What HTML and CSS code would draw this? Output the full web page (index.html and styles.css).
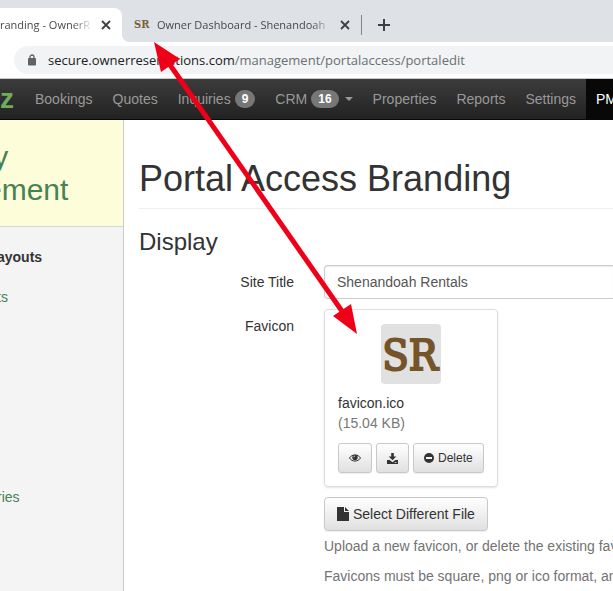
FILE: index.html
```html
<!DOCTYPE html>
<html lang="en">
<head>
<meta charset="utf-8">
<meta name="viewport" content="width=device-width, initial-scale=1">
<title>Portal Access Branding</title>
<link rel="stylesheet" href="styles.css">
</head>
<body>
<div class="tabstrip">
  <div class="tab tab-active">
    <span class="tab-title">randing - OwnerR</span>
    <button class="icon-button" type="button" aria-label="Close tab"><svg width="10" height="10" viewBox="0 0 10 10"><path d="M1 1l8 8M9 1l-8 8" stroke="#3c4043" stroke-width="1.800"/></svg></button>
  </div>
  <div class="tab">
    <span class="tab-favicon">SR</span>
    <span class="tab-title">Owner Dashboard - Shenandoah</span>
    <button class="icon-button" type="button" aria-label="Close tab"><svg width="10" height="10" viewBox="0 0 10 10"><path d="M1 1l8 8M9 1l-8 8" stroke="#3c4043" stroke-width="1.800"/></svg></button>
  </div>
  <span class="tab-divider"></span>
  <button class="icon-button" type="button" aria-label="New tab"><svg width="12" height="12" viewBox="0 0 12 12"><path d="M6 0v12M0 6h12" stroke="#3c4043" stroke-width="2"/></svg></button>
</div>
<div class="toolbar">
  <div class="omnibox">
    <svg width="8" height="12" viewBox="0 0 8 12"><path d="M2 5V3a2 2 0 0 1 4 0v2" fill="none" stroke="#5f6368" stroke-width="1.3"/><rect y="4" width="8" height="7.5" rx="1" fill="#5f6368"/></svg>
    <div class="url" role="textbox" aria-label="Address"><span class="url-host">secure.ownerreservations.com</span>/management/portalaccess/portaledit</div>
  </div>
</div>
<nav class="navbar">
  <a class="brand" href="#">z</a>
  <a class="nav-link" href="#">Bookings</a>
  <a class="nav-link" href="#">Quotes</a>
  <a class="nav-link" href="#">Inquiries <span class="badge">9</span></a>
  <a class="nav-link" href="#">CRM <span class="badge">16</span> <span class="caret"></span></a>
  <a class="nav-link" href="#">Properties</a>
  <a class="nav-link" href="#">Reports</a>
  <a class="nav-link" href="#">Settings</a>
  <a class="nav-link nav-link-active" href="#">PM</a>
</nav>
<div class="layout">
  <aside class="sidebar">
    <div class="sidebar-head"><div class="sidebar-title">ty<br>ement</div></div>
    <nav class="sidebar-nav">
      <strong>ayouts</strong>
      <a href="#">ts</a>
      <a class="sidebar-last" href="#">ries</a>
    </nav>
  </aside>
  <main class="content">
    <h1>Portal Access Branding</h1>
    <h2>Display</h2>
    <form class="form">
      <label for="site-title">Site Title</label>
      <input id="site-title" class="text-input" type="text" value="Shenandoah Rentals">
      <span class="field-label" id="favicon-label">Favicon</span>
      <div class="field" role="group" aria-labelledby="favicon-label">
        <div class="file-card">
          <svg class="preview" width="60" height="60" viewBox="0 0 60 60" role="img" aria-label="SR"><rect width="60" height="60" rx="4" fill="#e1e1e1"/><text class="preview-text" x="29" y="46" text-anchor="middle">SR</text></svg>
          <div class="file-name">favicon.ico</div>
          <div class="file-size">(15.04 KB)</div>
          <div class="actions">
            <button class="btn btn-small" type="button" aria-label="View"><svg width="12" height="10" viewBox="0 0 12 10"><path d="M.5 5C3 .9 9 .9 11.500 5 9 9.100 3 9.100.5 5z" fill="none" stroke="#333"/><circle cx="6" cy="4.500" r="2.700" fill="#333"/><path d="M4.600 4.200Q4.800 3 6 3" fill="none" stroke="#fff" stroke-width=".7"/></svg></button>
            <button class="btn btn-small" type="button" aria-label="Download"><svg width="11" height="11" viewBox="0 0 11 11"><path d="M4.200 0h2.600v3.500h2.500L5.500 7.300 1.700 3.500h2.500zM0 7h2.700l2.800 2.300L8.300 7H11v4H0z" fill="#333"/><path d="M7.500 9.500h2" stroke="#ddd" stroke-width=".8"/></svg></button>
            <button class="btn btn-small" type="button"><svg width="10" height="10" viewBox="0 0 10 10"><circle cx="5" cy="5" r="5" fill="#333"/><path d="M2 5h6" stroke="#f4f4f4" stroke-width="2"/></svg>Delete</button>
          </div>
        </div>
        <button class="btn" type="button"><svg width="12" height="14" viewBox="0 0 12 14"><path d="M0 0h7v5h5v9H0zM8 0l4 4H8z" fill="#333"/></svg>Select Different File</button>
        <p>Upload a new favicon, or delete the existing fav</p>
        <p>Favicons must be square, png or ico format, an</p>
      </div>
    </form>
  </main>
</div>
<svg class="callout" width="613" height="591" viewBox="0 0 613 591" aria-hidden="true"><path d="M168 62L344 314" stroke="#f00018" stroke-width="5"/><path d="M154 42l26 17-19 13zM357 334l-24-18 18-12z" fill="#f00018"/></svg>
</body>
</html>
```
FILE: styles.css
```css
* { box-sizing: border-box; }
body {
  margin: 0;
  min-height: 100vh;
  display: flex;
  flex-direction: column;
  position: relative;
  overflow: hidden;
  background: #fff;
  color: #333;
  font: 14px/20px "Liberation Sans", Arial, sans-serif;
}
a { color: #468254; text-decoration: none; }
button { font: inherit; color: inherit; }
svg { flex: none; }

.tabstrip {
  display: flex;
  height: 42px;
  padding-top: 8px;
  background: #dee1e6;
  font: 11px/34px "Open Sans", "Noto Sans", sans-serif;
  color: #45494d;
}
.tab {
  display: flex;
  align-items: center;
  gap: 8px;
  padding: 0 11px 0 12px;
  position: relative;
}
.tab-active {
  width: 122px;
  padding-left: 0;
  background: #fff;
  border-radius: 0 8px 0 0;
}
.tab-active::after {
  content: "";
  position: absolute;
  left: 100%;
  bottom: 0;
  width: 8px;
  height: 8px;
  background: radial-gradient(circle at 100% 0, transparent 8px, #fff 8px);
}
.tab-title {
  width: 175px;
  overflow: hidden;
  white-space: nowrap;
  -webkit-mask-image: linear-gradient(to left, transparent, #000 20px);
  mask-image: linear-gradient(to left, transparent, #000 20px);
}
.tab-active .tab-title { width: 93px; }
.tab-favicon {
  width: 15px;
  color: #7a6138;
  font: bold 11px/34px "DejaVu Serif Condensed", "DejaVu Serif", serif;
}
.icon-button {
  display: flex;
  align-items: center;
  padding: 0;
  border: 0;
  background: none;
}
.tab-divider {
  width: 1px;
  height: 20px;
  margin: 7px 16px 0 0;
  background: #808387;
}

.toolbar {
  height: 37px;
  padding: 4px 0 4px 14px;
  border-bottom: 1px solid #c8c8c8;
}
.omnibox {
  display: flex;
  align-items: center;
  gap: 12px;
  height: 28px;
  padding-left: 14px;
  border-radius: 14px 0 0 14px;
  background: #f1f3f4;
}
.url {
  font: 13px/28px "Open Sans", "Noto Sans", sans-serif;
  color: #6b6f73;
  white-space: nowrap;
}
.url-host { color: #202124; }

.navbar {
  display: flex;
  height: 41px;
  overflow: hidden;
  border-bottom: 1px solid #080808;
  background: linear-gradient(#3c3c3c, #222);
  line-height: 40px;
  white-space: nowrap;
}
.brand {
  flex: 0 0 25px;
  color: #70ad5b;
  font-size: 28px;
  font-weight: bold;
}
.nav-link {
  display: flex;
  flex: none;
  align-items: center;
  gap: 4px;
  padding: 0 10px;
  color: #999;
}
.nav-link-active { background: #080808; color: #fff; }
.badge {
  padding: 0 7px;
  border-radius: 9px;
  background: #777;
  color: #fff;
  font-size: 12px;
  font-weight: bold;
  line-height: 18px;
}
.caret {
  margin-left: 2px;
  border: 4px solid transparent;
  border-top-color: #999;
  border-bottom: 0;
}

.layout { display: flex; flex: 1; }
.sidebar {
  flex: 0 0 124px;
  overflow: hidden;
  border-right: 1px solid #ccc;
  background: #f4f4f4;
}
.sidebar-head {
  height: 107px;
  padding-top: 20px;
  border-bottom: 1px solid #d8d8d8;
  background: #fdfdd9;
}
.sidebar-title {
  margin-left: -15px;
  color: #468254;
  font-size: 30px;
  line-height: 33px;
}
.sidebar-nav {
  display: flex;
  flex-direction: column;
  gap: 20px;
  padding-top: 20px;
  margin-left: -3px;
}
.sidebar-last { margin-top: 160px; }

.content {
  flex: 1;
  min-width: 0;
  padding: 39px 0 0 15px;
  overflow: hidden;
}
h1, h2 { margin: 0; font-weight: normal; }
h1 {
  padding-bottom: 9px;
  border-bottom: 1px solid #eee;
  font-size: 36px;
  line-height: 40px;
}
h2 { padding: 20px 0 10px; font-size: 24px; line-height: 26px; }
.form {
  display: grid;
  grid-template-columns: 155px minmax(0, 1fr);
  column-gap: 30px;
  row-gap: 10px;
}
.form > label, .field-label { padding-top: 7px; text-align: right; }
.text-input {
  width: 100%;
  height: 34px;
  padding: 0 12px;
  border: 1px solid #ccc;
  border-right: 0;
  border-radius: 4px 0 0 4px;
  box-shadow: inset 0 1px 1px #ececec;
  color: #555;
  font: inherit;
}
.field { white-space: nowrap; }
.file-card {
  width: 174px;
  margin-bottom: 10px;
  padding: 14px 13px 13px;
  border: 1px solid #ddd;
  border-radius: 4px;
  box-shadow: 0 1px 2px #e4e4e4;
}
.preview { display: block; margin: 0 auto 9px; }
.preview-text {
  fill: #765429;
  stroke: #765429;
  stroke-width: 2px;
  font: 43px "DejaVu Serif Condensed", "DejaVu Serif", serif;
}
.file-size { color: #777; }
.actions { display: flex; gap: 4px; margin-top: 10px; }
.btn {
  display: flex;
  align-items: center;
  gap: 4px;
  height: 34px;
  padding: 0 12px;
  border: 1px solid #c8c8c8;
  border-radius: 4px;
  background: linear-gradient(#fff, #e0e0e0);
  box-shadow: 0 1px 1px #eee;
}
.btn-small { height: 30px; padding: 0 10px; border-radius: 3px; font-size: 12px; }
.field p { margin: 0; padding-top: 5px; color: #737373; }
.field p + p { margin-top: 5px; }

.callout {
  position: absolute;
  top: 0;
  left: 0;
  pointer-events: none;
}
```
